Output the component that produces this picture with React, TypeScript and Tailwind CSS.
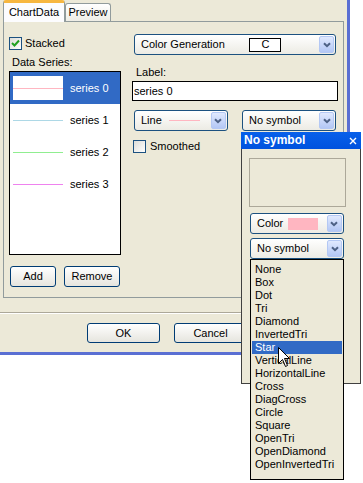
import type { ReactNode } from 'react'

const series = [
  { name: 'series 0', color: 'bg-[#FFB6C1]', selected: true },
  { name: 'series 1', color: 'bg-[#ADD8E6]', selected: false },
  { name: 'series 2', color: 'bg-[#90EE90]', selected: false },
  { name: 'series 3', color: 'bg-[#EE82EE]', selected: false },
]

const symbols = [
  'None',
  'Box',
  'Dot',
  'Tri',
  'Diamond',
  'InvertedTri',
  'Star',
  'VerticalLine',
  'HorizontalLine',
  'Cross',
  'DiagCross',
  'Circle',
  'Square',
  'OpenTri',
  'OpenDiamond',
  'OpenInvertedTri',
]

function DropButton() {
  return (
    <div className="ml-auto flex h-[17px] w-[15px] shrink-0 items-center justify-center rounded-[2px] border border-[#B4C8F4] bg-linear-to-b from-[#E0E9FE] to-[#B3C7F5]">
      <svg width="8" height="6" viewBox="0 0 8 6">
        <path d="M1 1.2 L4 4.2 L7 1.2" fill="none" stroke="#4D6185" strokeWidth="2" />
      </svg>
    </div>
  )
}

function Combo({ className, children }: { className: string; children: ReactNode }) {
  return (
    <div
      className={`flex h-[21px] items-center rounded-[3px] border border-[#1C5180] bg-linear-to-b from-white to-[#ECEBE4] pl-[6px] pr-[1px] ${className}`}
    >
      {children}
      <DropButton />
    </div>
  )
}

function Checkbox({ checked }: { checked?: boolean }) {
  return (
    <div className="flex h-[13px] w-[13px] shrink-0 items-center justify-center border border-[#1C5180] bg-linear-to-br from-[#DCDCD7] to-white">
      {checked && (
        <svg width="9" height="9" viewBox="0 0 9 9">
          <path d="M1 4 L3.5 6.5 L8 1.5" fill="none" stroke="#21A121" strokeWidth="2" />
        </svg>
      )}
    </div>
  )
}

function Button({ className, children }: { className: string; children: ReactNode }) {
  return (
    <div
      className={`flex items-center justify-center rounded-[3px] border border-[#003C74] bg-linear-to-b from-white to-[#E6E5DE] ${className}`}
    >
      {children}
    </div>
  )
}

export default function App() {
  return (
    <div className="relative h-[483px] w-[363px] overflow-hidden bg-white font-['Liberation_Sans',Arial,sans-serif] text-[11px] leading-[13px] text-black">
      <div className="flex h-[355px] w-[350px] flex-col border-r-[3px] border-b-[3px] border-[#5A6FD3] bg-[#ECE9D8]">
        {/* tabs */}
        <div className="flex h-[21px] items-end pl-[3px]">
          <div className="relative z-10 mb-[-1px] flex h-[22px] w-[62px] items-center justify-center rounded-t-[3px] border-x border-t-[3px] border-x-[#919B9C] border-t-[#F7B740] bg-[#FCFCFE]">
            ChartData
          </div>
          <div className="flex h-[18px] w-[46px] items-center justify-center rounded-t-[3px] border-x border-t border-[#919B9C] bg-linear-to-b from-white to-[#EEEDE6]">
            Preview
          </div>
        </div>

        {/* panel */}
        <div className="ml-[3px] flex h-[277px] w-[341px] border border-[#919B9C]">
          <div className="ml-[5px] flex w-[112px] flex-col">
            <div className="mt-[15px] flex h-[13px] items-center">
              <Checkbox checked />
              <span className="ml-[3px]">Stacked</span>
            </div>
            <div className="mt-[6px] h-[13px] pl-[3px]">Data Series:</div>
            <div className="mt-[2px] flex h-[184px] flex-col border border-black bg-white">
              {series.map((s) => (
                <div
                  key={s.name}
                  className={`flex h-[32px] items-center ${s.selected ? 'bg-[#316AC5] text-white' : ''}`}
                >
                  <div className={`ml-[3px] flex h-[24px] w-[50px] items-center ${s.selected ? 'bg-white' : ''}`}>
                    <div className={`h-px w-full ${s.color}`} />
                  </div>
                  <span className="ml-[7px]">{s.name}</span>
                </div>
              ))}
            </div>
            <div className="mt-[11px] flex">
              <Button className="ml-[1px] h-[21px] w-[46px]">Add</Button>
              <Button className="ml-[8px] h-[21px] w-[56px]">Remove</Button>
            </div>
          </div>

          <div className="ml-[11px] flex w-[206px] flex-col">
            <Combo className="ml-[2px] mt-[12px] w-[202px]">
              <span>Color Generation</span>
              <div className="ml-auto mr-[13px] flex h-[14px] w-[32px] items-center justify-center border border-black bg-white">
                C
              </div>
            </Combo>
            <div className="mt-[11px] h-[13px] pl-[4px]">Label:</div>
            <div className="mt-[2px] flex h-[20px] w-[206px] items-center border border-black bg-white pl-[1px]">
              series 0
            </div>
            <div className="ml-[2px] mt-[9px] flex gap-[14px]">
              <Combo className="w-[94px]">
                <span>Line</span>
                <div className="ml-auto mr-[4px] h-px w-[31px] bg-[#FFB6C1]" />
              </Combo>
              <Combo className="w-[94px]">
                <span>No symbol</span>
              </Combo>
            </div>
            <div className="ml-[1px] mt-[9px] flex h-[13px] items-center">
              <Checkbox />
              <span className="ml-[4px]">Smoothed</span>
            </div>
          </div>
        </div>

        <div className="mt-[14px] w-[347px] border-t border-b border-t-[#ACA899] border-b-white" />
        <div className="mt-[9px] flex pl-[87px]">
          <Button className="h-[20px] w-[73px]">OK</Button>
          <Button className="ml-[14px] h-[20px] w-[73px]">Cancel</Button>
        </div>
      </div>

      {/* symbol popup window */}
      <div className="absolute left-[241px] top-[132px] flex h-[252px] w-[120px] flex-col">
        <div className="flex h-[17px] items-center bg-linear-to-b from-[#0860EA] to-[#0052DE] pl-[3px] pr-[4px] text-[12px] font-bold text-white">
          <span>No symbol</span>
          <svg className="ml-auto" width="8" height="8" viewBox="0 0 8 8">
            <path d="M1 1 L7 7 M7 1 L1 7" stroke="white" strokeWidth="1.4" />
          </svg>
        </div>
        <div className="flex flex-1 flex-col border-x border-b border-[#404040] bg-[#ECE9D8]">
          <div className="ml-[7px] mt-[9px] h-[49px] w-[97px] border border-[#ACA899]" />
          <Combo className="ml-[8px] mt-[6px] w-[94px]">
            <span>Color</span>
            <div className="ml-auto mr-[4px] h-[12px] w-[30px] bg-[#FFB6C1]" />
          </Combo>
          <Combo className="ml-[8px] mt-[4px] w-[94px]">
            <span>No symbol</span>
          </Combo>
        </div>
      </div>

      {/* open dropdown list */}
      <div className="absolute left-[250px] top-[259px] flex h-[221px] w-[94px] flex-col border border-black bg-[#ECE9D8] pt-[3px]">
        {symbols.map((s) => (
          <div
            key={s}
            className={`mx-px h-[13px] pl-[3px] ${s === 'Star' ? 'bg-[#316AC5] text-white' : ''}`}
          >
            {s}
          </div>
        ))}
      </div>

      {/* mouse pointer */}
      <svg className="absolute left-[278px] top-[347px]" width="13" height="21" viewBox="0 0 13 21">
        <path
          d="M0.5 0.5 L0.5 16.5 L4.5 12.5 L7.5 19.5 L9.5 18.5 L6.5 11.5 L11.5 11.5 Z"
          fill="white"
          stroke="black"
          strokeWidth="1"
        />
      </svg>
    </div>
  )
}
